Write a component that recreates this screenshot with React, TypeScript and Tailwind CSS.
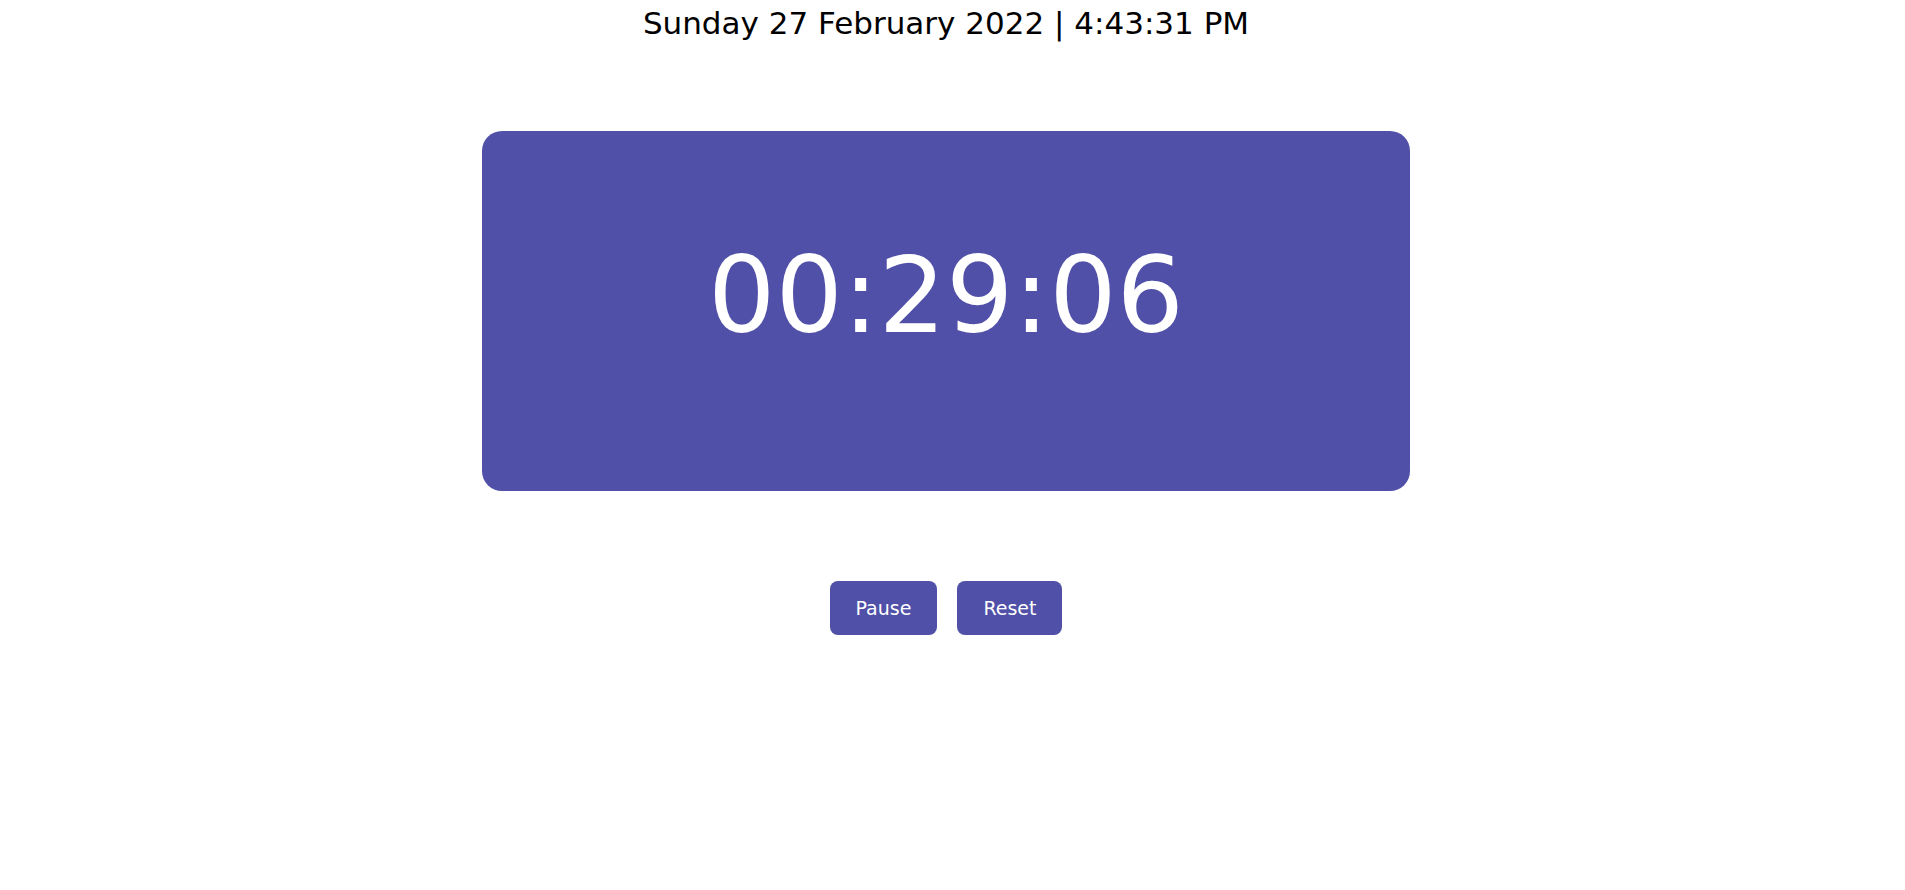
import { useState } from "react";

const font = { fontFamily: '"DejaVu Sans", Verdana, sans-serif' };

export default function App() {
    const [running, setRunning] = useState(true);
    const [elapsed, setElapsed] = useState(29 * 60 + 6);

    const hh = String(Math.floor(elapsed / 3600)).padStart(2, "0");
    const mm = String(Math.floor((elapsed % 3600) / 60)).padStart(2, "0");
    const ss = String(elapsed % 60).padStart(2, "0");

    return (
        <div className="min-h-screen bg-white pr-[13px]" style={font}>
            <div className="pt-[5px] text-center text-[31px] leading-[normal] text-black">
                Sunday 27 February 2022 | 4:43:31 PM
            </div>
            <div className="mt-[90px] mx-auto w-[928px] h-[360px] rounded-[20px] bg-[#5050a8] pt-[103px] text-center">
                <div className="text-[106px] leading-[normal] text-white">
                    {hh}:{mm}:{ss}
                </div>
            </div>
            <div className="mt-[90px] flex justify-center gap-5">
                <button
                    className="h-[54px] px-[26px] rounded-lg bg-[#5050a8] text-white text-[19px]"
                    onClick={() => setRunning(!running)}
                >
                    {running ? "Pause" : "Start"}
                </button>
                <button
                    className="h-[54px] px-[26px] rounded-lg bg-[#5050a8] text-white text-[19px]"
                    onClick={() => setElapsed(0)}
                >
                    Reset
                </button>
            </div>
        </div>
    );
}
